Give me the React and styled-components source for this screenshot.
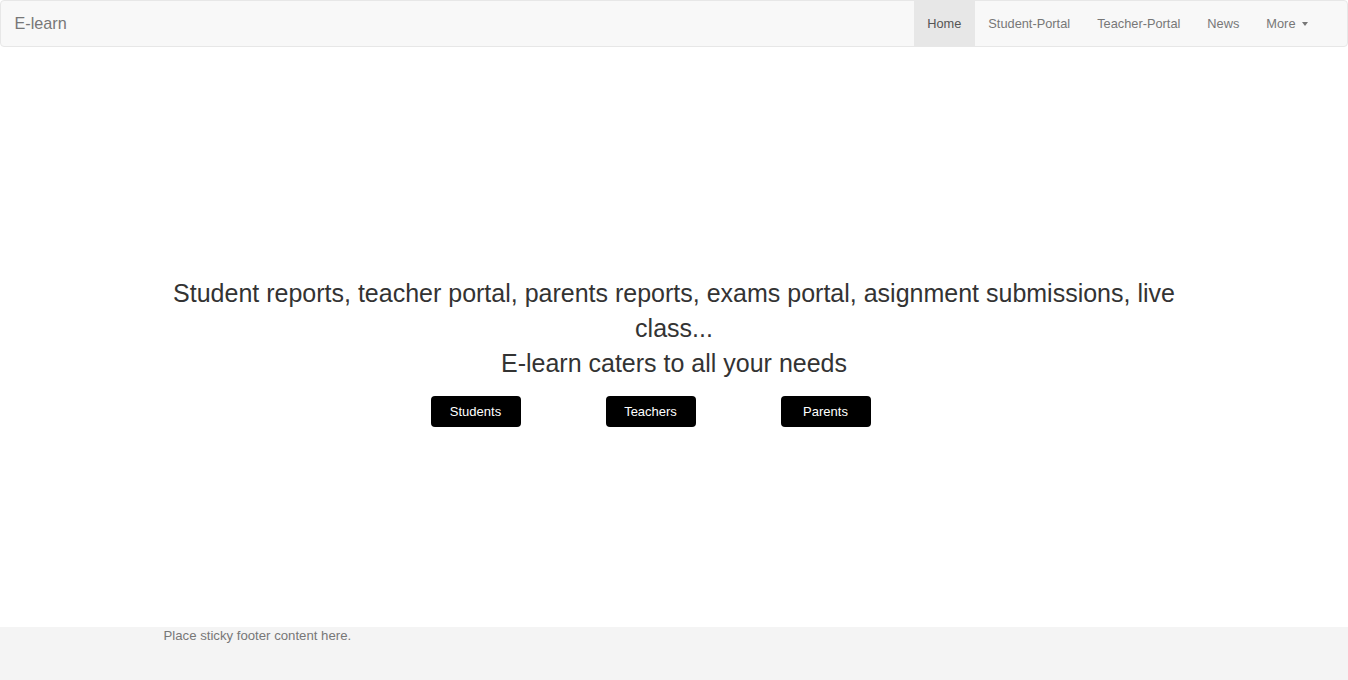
import React from 'react';
import styled, { createGlobalStyle } from 'styled-components';

const GlobalStyle = createGlobalStyle`
    html, body {
        margin: 0;
        padding: 0;
        background: #fff;
    }
    body {
        font-family: "Liberation Sans", Arial, Helvetica, sans-serif;
        color: #333;
    }
    * {
        box-sizing: border-box;
    }
`;

const PAGE = styled.div`
    min-height: 100vh;
    display: flex;
    flex-direction: column;
`;

const NAVBAR = styled.nav`
    display: flex;
    justify-content: space-between;
    align-items: stretch;
    height: 47px;
    background: #f8f8f8;
    border: 1px solid #e7e7e7;
    border-radius: 4px;
    padding-right: 26px;
`;

const BRAND = styled.a`
    display: flex;
    align-items: center;
    padding: 0 13.5px;
    font-size: 16.2px;
    color: #777;
    text-decoration: none;
    cursor: pointer;
`;

const NAVLIST = styled.ul`
    display: flex;
    list-style: none;
    margin: 0;
    padding: 0;
`;

const NAVITEM = styled.li`
    display: flex;
    align-items: center;
    padding: 0 13.5px;
    font-size: 12.8px;
    line-height: 18px;
    color: ${props => (props.active ? '#555' : '#777')};
    background: ${props => (props.active ? '#e7e7e7' : 'transparent')};
    cursor: pointer;
`;

const CARET = styled.span`
    display: inline-block;
    width: 0;
    height: 0;
    margin-left: 6px;
    border-top: 4px solid #777;
    border-left: 3.5px solid transparent;
    border-right: 3.5px solid transparent;
`;

const MAIN = styled.main`
    flex: 1;
    padding-top: 229px;
`;

const CONTAINER = styled.div`
    width: 1053px;
    margin: 0 auto;
    padding: 0 13.5px;
`;

const HEADLINE = styled.h3`
    margin: 0;
    font-size: 25px;
    font-weight: 400;
    line-height: 35px;
    text-align: center;
    color: #333;
`;

const ACTIONS = styled.div`
    display: flex;
    justify-content: center;
    gap: 85px;
    padding-right: 47px;
    margin-top: 15px;
`;

const BUTTON = styled.button`
    width: 90px;
    height: 31px;
    border: none;
    border-radius: 4px;
    background: #000;
    color: #fff;
    font-family: inherit;
    font-size: 13px;
    cursor: pointer;
`;

const FOOTER = styled.footer`
    height: 53px;
    background: #f4f4f4;
`;

const FOOTNOTE = styled.p`
    margin: 0;
    padding-left: 2.5px;
    font-size: 13.2px;
    line-height: 18px;
    color: #777;
`;

const links = ['Home', 'Student-Portal', 'Teacher-Portal', 'News'];

export default function App() {
    return (
        <PAGE>
            <GlobalStyle />
            <NAVBAR>
                <BRAND>E-learn</BRAND>
                <NAVLIST>
                    {links.map((l, i) => (
                        <NAVITEM key={l} active={i === 0}>
                            {l}
                        </NAVITEM>
                    ))}
                    <NAVITEM>
                        More
                        <CARET />
                    </NAVITEM>
                </NAVLIST>
            </NAVBAR>
            <MAIN>
                <CONTAINER>
                    <HEADLINE>
                        Student reports, teacher portal, parents reports, exams portal, asignment submissions, live
                        class...
                        <br />
                        E-learn caters to all your needs
                    </HEADLINE>
                    <ACTIONS>
                        <BUTTON>Students</BUTTON>
                        <BUTTON>Teachers</BUTTON>
                        <BUTTON>Parents</BUTTON>
                    </ACTIONS>
                </CONTAINER>
            </MAIN>
            <FOOTER>
                <CONTAINER>
                    <FOOTNOTE>Place sticky footer content here.</FOOTNOTE>
                </CONTAINER>
            </FOOTER>
        </PAGE>
    );
}
